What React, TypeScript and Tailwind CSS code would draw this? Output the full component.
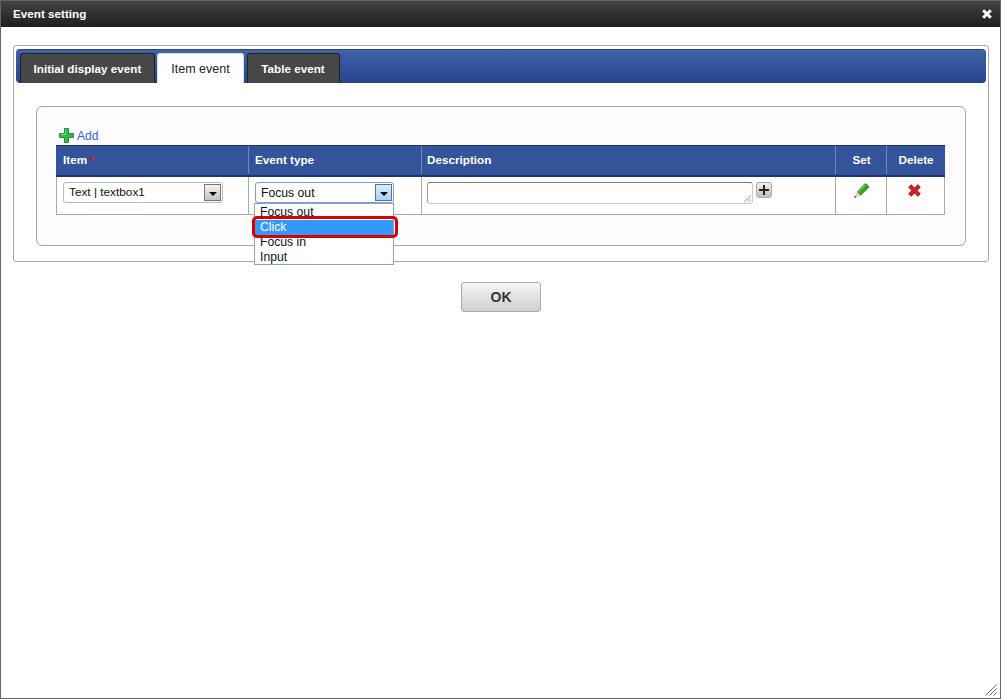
const tabs = [
  { label: "Initial display event", width: "w-[135px]", active: false },
  { label: "Item event", width: "w-[87px]", active: true },
  { label: "Table event", width: "ml-[1px] w-[93px] pr-[1px]", active: false },
];

const options = ["Focus out", "Click", "Focus in", "Input"];

// small black caret used by the select boxes
const SelectArrow = ({ focused }: { focused?: boolean }) => (
  <span
    className={
      "flex h-[17px] w-[17px] items-center justify-center border " +
      (focused
        ? "border-[#5a6f9c] bg-gradient-to-b from-[#d9ecfb] to-[#a9d3f2]"
        : "border-[#777] bg-gradient-to-b from-[#f4f4f4] to-[#c4c4c4]")
    }
  >
    <span className="mt-[2px] h-0 w-0 border-x-[4px] border-t-[4px] border-x-transparent border-t-black" />
  </span>
);

const ResizeGrip = ({ className }: { className: string }) => (
  <svg className={className} viewBox="0 0 12 12" fill="none" stroke="#666" strokeWidth="1">
    <path d="M0.5 11.5 L11.5 0.5 M4.5 11.5 L11.5 4.5 M8.5 11.5 L11.5 8.5" />
  </svg>
);

const Pencil = () => (
  <svg width="17" height="17" viewBox="0 0 17 16">
    <path d="M4 9.5 L11.5 1.5 Q12.5 0.8 13.5 1.5 L15.5 3.5 Q16 4.5 15.3 5.5 L7.5 13 Z" fill="#3f9e2f" stroke="#2b7d22" strokeWidth="0.6" />
    <path d="M5 9.5 L12 2.5" stroke="#7ccb5d" strokeWidth="1.2" />
    <path d="M4 9.5 L7.5 13 L1 15.5 Z" fill="#e6cfa4" />
    <path d="M1 15.5 L2 13 L3.4 14.4 Z" fill="#444" />
  </svg>
);

const GreenPlus = () => (
  <svg width="15" height="15" viewBox="0 0 15 15">
    <path d="M5.5 0.5 H9.5 V5.5 H14.5 V9.5 H9.5 V14.5 H5.5 V9.5 H0.5 V5.5 H5.5 Z" fill="#35b54a" stroke="#22963a" strokeWidth="1" />
    <path d="M6.5 2 V6.5 H2" fill="none" stroke="#7fdc8d" strokeWidth="1" />
  </svg>
);

const BlockPlus = () => (
  <svg width="10" height="10" viewBox="0 0 10 10">
    <path d="M4 0 H6 V4 H10 V6 H6 V10 H4 V6 H0 V4 H4 Z" fill="#222" />
  </svg>
);

const CloseX = () => (
  <svg width="10" height="10" viewBox="0 0 10 10">
    <path d="M1.2 1.2 L8.8 8.8 M8.8 1.2 L1.2 8.8" stroke="#fff" strokeWidth="3" />
  </svg>
);

const DeleteX = () => (
  <svg width="13" height="13" viewBox="0 0 13 13">
    <path d="M1.7 1.7 L11.3 11.3 M11.3 1.7 L1.7 11.3" stroke="#a80f14" strokeWidth="4.2" />
    <path d="M1.9 1.9 L11.1 11.1 M11.1 1.9 L1.9 11.1" stroke="#d3222a" strokeWidth="2.8" />
  </svg>
);

const App = () => {
  return (
    <div className="relative h-[699px] w-[1001px] overflow-hidden border border-[#666] bg-white font-['Liberation_Sans',Arial,sans-serif] text-xs text-[#222]">
      {/* Title bar */}
      <div className="flex h-[26px] items-center justify-between bg-gradient-to-b from-[#434343] to-[#1f1f1f] pl-3 pr-[8px] text-[11.7px] font-bold text-white">
        <span>Event setting</span>
        <CloseX />
      </div>

      {/* Outer panel */}
      <div className="mx-3 mt-[18px] h-[217px] w-[976px] rounded-[3px] border border-[#aaa] px-[2px] pt-[3px]">
        {/* Tab bar */}
        <div className="flex h-[34px] items-end gap-[2px] rounded-[4px] border-t border-[#2a4585] bg-gradient-to-b from-[#3f62a8] to-[#25448c] pl-1">
          {tabs.map((tab) => (
            <div
              key={tab.label}
              className={
                "flex h-[30px] items-center justify-center rounded-t-[3px] " +
                tab.width +
                (tab.active
                  ? " border-x border-t border-[#ddd] bg-white pt-[2px] text-[12.5px] text-[#222]"
                  : " border-x border-t border-[#222] bg-[#474747] text-[11.7px] font-bold text-white")
              }
            >
              {tab.label}
            </div>
          ))}
        </div>

        {/* Inner panel */}
        <div className="relative mx-5 mt-[23px] h-[140px] w-[930px] rounded-[6px] border border-[#aaa] bg-[#fcfcff] px-[19px] pt-[21px]">
          <div className="flex h-[17px] items-start gap-[3px] pl-[3px] text-xs leading-[17px] text-[#3a5fc4]">
            <GreenPlus />
            <span>Add</span>
          </div>

          {/* Table */}
          <div className="w-[889px] text-xs">
            <div className="grid h-[32px] grid-cols-[193px_173px_414px_51px_58px] border-y border-[#1d3570] border-b-2 bg-[#33539a] pb-[1px] text-[11.7px] font-bold text-white">
              <div className="flex items-center border-r border-[#6d89c4] pl-[7px]">
                Item <span className="ml-[3px] text-[#e0103a]">*</span>
              </div>
              <div className="flex items-center border-r border-[#6d89c4] pl-[6px]">Event type</div>
              <div className="flex items-center border-r border-[#6d89c4] pl-[5px]">Description</div>
              <div className="flex items-center justify-center border-r border-[#6d89c4] pl-[1px]">Set</div>
              <div className="flex items-center justify-center">Delete</div>
            </div>
            <div className="grid h-[38px] grid-cols-[192px_173px_414px_51px_57px] border-x border-b border-[#aaa] bg-white">
              <div className="border-r border-[#aaa] pl-[6px] pt-[5px]">
                <div className="flex h-[21px] w-[160px] items-center justify-between rounded-[3px] border border-[#bbb] pl-[5px] pr-[1px] text-[11.8px] text-[#111]">
                  <span className="pt-[1px]">Text | textbox1</span>
                  <SelectArrow />
                </div>
              </div>
              <div className="border-r border-[#aaa] pl-[6px] pt-[5px]">
                <div className="flex h-[21px] w-[139px] items-center justify-between rounded-[3px] border border-[#7f9be0] pl-[5px] pr-[1px] text-[12.2px] text-[#111]">
                  <span className="pt-[1px]">Focus out</span>
                  <SelectArrow focused />
                </div>
              </div>
              <div className="flex items-start gap-[3px] border-r border-[#aaa] pl-[5px] pt-[5px]">
                <div className="relative h-[22px] w-[326px] rounded-[3px] border border-t-[#777] border-l-[#999] border-r-[#ccc] border-b-[#ccc] bg-white">
                  <ResizeGrip className="absolute bottom-[1px] right-[1px] h-[7px] w-[7px]" />
                </div>
                <div className="flex h-[16px] w-[16px] items-center justify-center rounded-[3px] border border-[#aaa] bg-gradient-to-b from-[#f0f0f0] to-[#bdbdbd]">
                  <BlockPlus />
                </div>
              </div>
              <div className="flex items-start justify-center border-r border-[#aaa] pt-[5px]">
                <Pencil />
              </div>
              <div className="flex items-start justify-center pr-[2px] pt-[7px]">
                <DeleteX />
              </div>
            </div>
          </div>

          {/* Open dropdown */}
          <div className="absolute left-[217px] top-[96px] z-10 h-[62px] w-[140px] overflow-hidden border border-[#8aa4bf] bg-white pt-[1px] text-[12.2px] leading-[15px] text-[#111]">
            {options.map((option) => (
              <div
                key={option}
                className={"h-[15px] pl-[5px] " + (option === "Click" ? "bg-[#3399ff] text-white" : "")}
              >
                {option}
              </div>
            ))}
          </div>

          {/* Red highlight */}
          <div className="absolute left-[215px] top-[109px] z-20 h-[22px] w-[146px] rounded-[5px] border-[3px] border-[#dd0000]" />
        </div>
      </div>

      {/* OK button */}
      <div className="mt-5 flex justify-center">
        <div className="flex h-[30px] w-[80px] items-center justify-center rounded-[3px] border border-[#aaa] bg-gradient-to-b from-[#f6f6f6] to-[#cfcfcf] pl-[1px] text-sm font-bold text-[#333]">
          OK
        </div>
      </div>

      <ResizeGrip className="absolute bottom-[2px] right-[3px] h-[12px] w-[12px]" />
    </div>
  );
};

export default App;
